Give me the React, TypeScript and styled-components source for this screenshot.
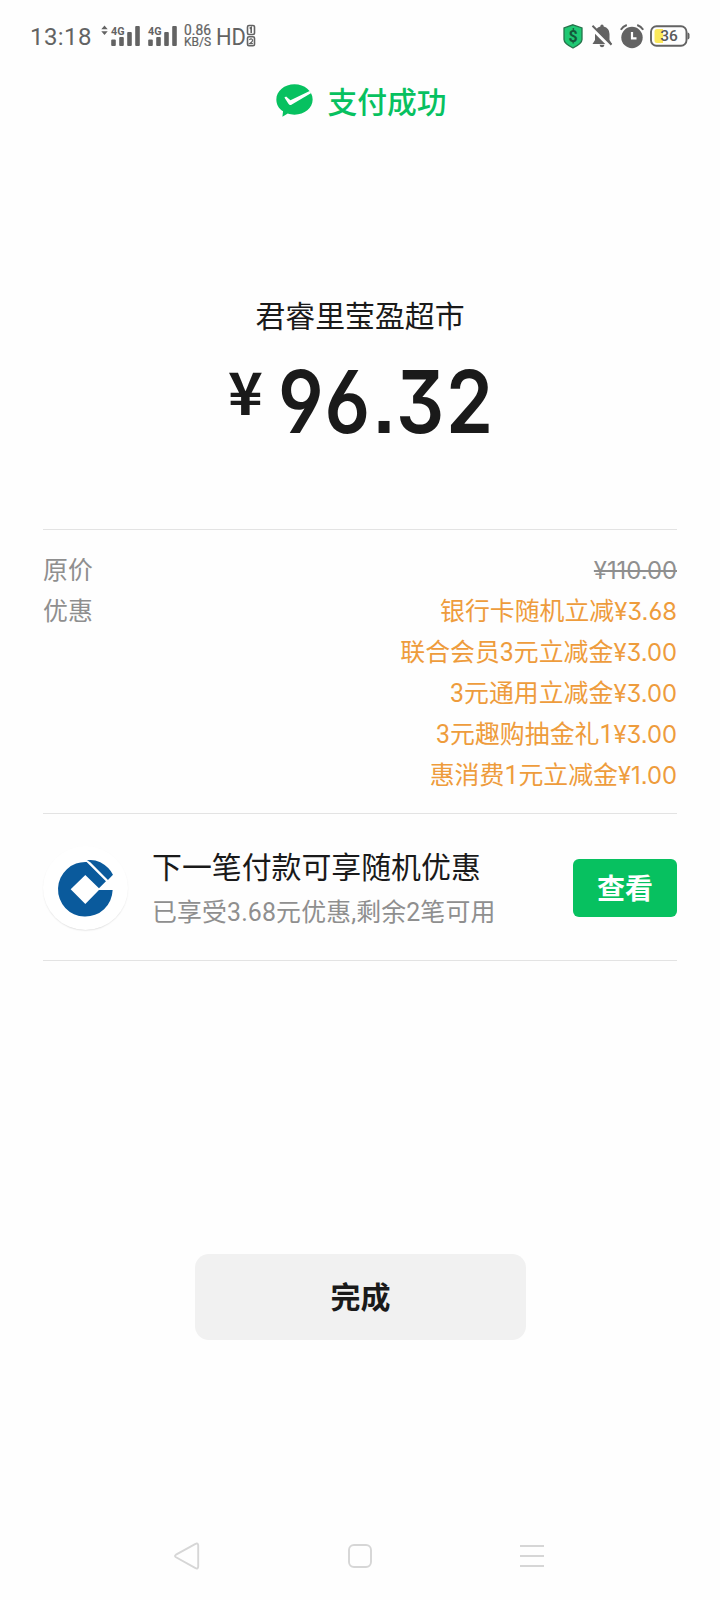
import React from 'react';
import styled, { createGlobalStyle } from 'styled-components';

const GlobalStyle = createGlobalStyle`
  * { box-sizing: border-box; }
  body {
    margin: 0;
    background: #fefefe;
    color: #1a1a1a;
    font-family: Roboto, 'Noto Sans CJK SC', sans-serif;
  }
`;

const Screen = styled.div`
  width: 720px;
  height: 1600px;
  display: flex;
  flex-direction: column;
  overflow: hidden;
`;

const StatusBar = styled.header`
  height: 72px;
  padding: 0 30px;
  display: flex;
  justify-content: space-between;
  align-items: center;
  font-family: Roboto, sans-serif;
  color: #636363;
`;

const StatusGroup = styled.div`
  display: flex;
  align-items: center;
`;

const Clock = styled.span`
  width: 61px;
  font-size: 24px;
  line-height: 28px;
  letter-spacing: 0.4px;
  padding-top: 2px;
`;

const Glyph = styled.svg<{ $gap?: number }>`
  display: block;
  flex: none;
  overflow: visible;
  margin-left: ${({ $gap = 0 }) => $gap}px;
`;

const Speed = styled.div`
  margin-left: 6px;
  width: 30px;
  display: flex;
  flex-direction: column;
  font-size: 13.8px;
  line-height: 12px;
  white-space: nowrap;
  -webkit-text-stroke: 0.2px currentColor;
`;

const SpeedUnit = styled.span`
  font-size: 12px;
  line-height: 12px;
`;

const ResultHeader = styled.div`
  height: 56px;
  margin-bottom: 2px;
  display: flex;
  justify-content: center;
  align-items: center;
  gap: 14px;
  padding-left: 3px;
  color: #07c160;
  font-size: 29.8px;
  font-weight: 500;
`;

const Summary = styled.section`
  height: 399px;
  padding-top: 163px;
  display: flex;
  flex-direction: column;
  align-items: center;
`;

const Merchant = styled.h1`
  margin: 0;
  font-size: 29.9px;
  font-weight: 400;
  line-height: 48px;
`;

const Amount = styled.div`
  display: flex;
  align-items: flex-start;
  margin-top: 16px;
  height: 90px;
`;

const Currency = styled.span`
  font-family: 'Noto Sans CJK SC', sans-serif;
  font-size: 59px;
  font-weight: 700;
  line-height: 66px;
  width: 50px;
`;

const Figure = styled.span`
  width: 214px;
  font-family: Inter, sans-serif;
  font-size: 86px;
  font-weight: 600;
  line-height: 90px;
  letter-spacing: 2px;
  font-feature-settings: 'cv03', 'cv04', 'cv09', 'ss07';
  transform: scaleX(0.88);
  transform-origin: left center;
`;

const Content = styled.div`
  margin: 0 43px;
`;

const PriceList = styled.dl`
  margin: 0;
  height: 284px;
  padding-top: 20px;
  border-top: 1px solid #e3e3e3;
  font-size: 24.9px;
  line-height: 41px;
`;

const PriceRow = styled.div`
  display: flex;
  justify-content: space-between;
`;

const Label = styled.dt`
  color: #8f8f8f;
`;

const Value = styled.dd`
  margin: 0;
  text-align: right;
  color: #ee9c3c;
`;

const Money = styled.span<{ $struck?: boolean }>`
  font-family: Inter, sans-serif;
  font-size: 23.8px;
  font-feature-settings: 'cv03', 'cv04', 'cv09', 'ss07';
  color: ${({ $struck }) => ($struck ? '#8f8f8f' : 'inherit')};
  text-decoration: ${({ $struck }) => ($struck ? 'line-through' : 'none')};
  text-decoration-thickness: 2px;
`;

const Promo = styled.section`
  height: 148px;
  display: flex;
  align-items: center;
  padding-top: 1px;
  border-top: 1px solid #e3e3e3;
  border-bottom: 1px solid #e3e3e3;
`;

const BankBadge = styled.div`
  width: 85px;
  height: 84px;
  border-radius: 50%;
  display: flex;
  align-items: center;
  justify-content: center;
  background: #fff;
  box-shadow: 0 1px 2px -1px rgba(0, 0, 0, 0.25);
`;

const PromoText = styled.div`
  flex: 1;
  margin-left: 24px;
  padding-top: 5px;
`;

const PromoTitle = styled.div`
  font-size: 29.9px;
  line-height: 46px;
`;

const PromoNote = styled.div`
  color: #8f8f8f;
  font-size: 24.9px;
  line-height: 44px;
  letter-spacing: 0.13px;
`;

const ViewButton = styled.button`
  width: 104px;
  height: 58px;
  border: 0;
  border-radius: 6px;
  padding: 0;
  background: #07c160;
  color: #fff;
  font: 700 28px/57px 'Noto Sans CJK SC', sans-serif;
`;

const DoneButton = styled.button`
  width: 331px;
  height: 86px;
  margin: 293px auto 0 195px;
  border: 0;
  border-radius: 14px;
  padding: 0 0 3px;
  background: #f1f1f1;
  color: #1a1a1a;
  font: 700 30px/83px 'Noto Sans CJK SC', sans-serif;
`;

const NavBar = styled.nav`
  margin-top: auto;
  height: 88px;
  padding: 0 176px 0 172px;
  display: flex;
  justify-content: space-between;
  align-items: center;
`;

const discounts = [
  { name: '银行卡随机立减', amount: '¥3.68' },
  { name: '联合会员3元立减金', amount: '¥3.00' },
  { name: '3元通用立减金', amount: '¥3.00' },
  { name: '3元趣购抽金礼1', amount: '¥3.00' },
  { name: '惠消费1元立减金', amount: '¥1.00' },
];

const Signal = ({ gap }: { gap: number }) => (
  <Glyph $gap={gap} width="30" height="22" viewBox="0 0 30 22" fill="#636363">
    <text x="0" y="9.5" fontSize="11.5" fontWeight="700" textLength="13.5" lengthAdjust="spacingAndGlyphs">4G</text>
    <rect x="0.2" y="14.5" width="4.6" height="6.5" rx="1" />
    <rect x="8.2" y="12" width="4.6" height="9" rx="1" />
    <rect x="16.2" y="7" width="4.6" height="14" rx="1" />
    <rect x="24.2" y="1" width="4.6" height="20" rx="1" />
  </Glyph>
);

export default function App() {
  return (
    <Screen>
      <GlobalStyle />
      <StatusBar>
        <StatusGroup>
          <Clock>13:18</Clock>
          <Glyph $gap={10} width="7" height="24" viewBox="0 0 7 24" fill="#636363">
            <path d="M0.3 5.3 3.5 1.5l3.2 3.8zM0.3 7.3h6.4L3.5 11z" />
          </Glyph>
          <Signal gap={3} />
          <Signal gap={7} />
          <Speed>
            <span>0.86</span>
            <SpeedUnit>KB/S</SpeedUnit>
          </Speed>
          <Glyph $gap={3} width="40" height="24" viewBox="0 0 40 24" fill="#636363">
            <text x="-1" y="20.5" fontSize="24" textLength="30" lengthAdjust="spacingAndGlyphs">HD</text>
            <rect x="30.5" y="1.5" width="7" height="9" rx="1.5" fill="none" stroke="#636363" strokeWidth="1.6" />
            <path d="M32.7 4.5 34.2 3.5V9" fill="none" stroke="#636363" strokeWidth="1.6" />
            <rect x="30.5" y="12.8" width="7" height="9" rx="1.5" fill="none" stroke="#636363" strokeWidth="1.6" />
            <path d="M32.3 15.8q1.8-1.8 3-.3t-2.8 4.2h3.4" fill="none" stroke="#636363" strokeWidth="1.2" />
          </Glyph>
        </StatusGroup>
        <StatusGroup>
          <Glyph width="20" height="25" viewBox="0 0 20 25">
            <path d="M10 .8 19 4v11.5q0 4-9 8.5-9-4.5-9-8.5V4z" fill="#1fc873" stroke="#26734b" strokeWidth="1.3" />
            <text x="10" y="18" textAnchor="middle" fontSize="16" fontWeight="700" fill="#14573a">$</text>
          </Glyph>
          <Glyph $gap={9} width="20" height="24" viewBox="0 0 20 24" fill="#636363">
            <path d="M10 .5q1.7 0 1.7 2Q17.5 4 17.500 10v6l2.500 4H.5L3 16v-6q0-6 5.300-7.500 0-2 1.700-2zM7.500 20.800h5Q12 23.300 10 23.300t-2.500-2.500z" />
            <path d="M-.5 3.800 18 22.300" stroke="#fefefe" strokeWidth="3.5" />
            <path d="M.5 1.800 19.500 20.800" stroke="#636363" strokeWidth="2" />
          </Glyph>
          <Glyph $gap={8} width="24" height="25" viewBox="0 0 24 25" fill="none" stroke="#636363">
            <circle cx="12" cy="13.5" r="10.7" fill="#636363" stroke="none" />
            <path d="M.8 5.800Q3 2.300 6.800 1M23.200 5.800Q21 2.300 17.200 1" strokeWidth="2" />
            <path d="M12 8v6.300h4.500" stroke="#fefefe" strokeWidth="2.2" />
          </Glyph>
          <Glyph $gap={6} width="40" height="22" viewBox="0 0 40 22">
            <path d="M7 4h6v14H7q-2.500 0-2.500-2.500v-9Q4.500 4 7 4z" fill="#fce95a" />
            <rect x="1" y="1.2" width="35.5" height="19.6" rx="5.5" fill="none" stroke="#636363" strokeWidth="1.9" />
            <path d="M37.5 7.500q2 0 2 2v3q0 2-2 2z" fill="#636363" />
            <text x="19" y="16.3" textAnchor="middle" fontSize="15.5" fontWeight="500" fill="#5a5a5a">36</text>
          </Glyph>
        </StatusGroup>
      </StatusBar>

      <ResultHeader>
        <Glyph width="37" height="33" viewBox="50 42 110 98">
          <path d="M105 43c30 0 54 20 54 45s-24 45-54 45c-8 0-14-1-20-3l-16 9 2-16c-13-8-20-20-20-35 0-25 24-45 54-45z" fill="#07c160" />
          <path d="M75 82 80 79 93 90 150 63 155 69 97 103Q91 107 87 101z" fill="#fefefe" />
        </Glyph>
        支付成功
      </ResultHeader>

      <Summary>
        <Merchant>君睿里莹盈超市</Merchant>
        <Amount>
          <Currency>¥</Currency>
          <Figure>96.32</Figure>
        </Amount>
      </Summary>

      <Content>
        <PriceList>
          <PriceRow>
            <Label>原价</Label>
            <Value>
              <Money $struck>¥110.00</Money>
            </Value>
          </PriceRow>
          <PriceRow>
            <Label>优惠</Label>
            <Value>
              {discounts.map(({ name, amount }) => (
                <div key={name}>
                  {name}
                  <Money>{amount}</Money>
                </div>
              ))}
            </Value>
          </PriceRow>
        </PriceList>
        <Promo>
          <BankBadge>
            <Glyph width="55.3" height="58" viewBox="84 84 166 174" fill="#0a5a9c">
              <path d="M248 177A82 82 0 1 1 170 93L228 151 207 172 166 132 122 175 166 219 207 177z" />
              <path d="M171 88Q190 84 211 94 237 108 249 131L234 147 181 94z" />
            </Glyph>
          </BankBadge>
          <PromoText>
            <PromoTitle>下一笔付款可享随机优惠</PromoTitle>
            <PromoNote>已享受3.68元优惠,剩余2笔可用</PromoNote>
          </PromoText>
          <ViewButton>查看</ViewButton>
        </Promo>
      </Content>

      <DoneButton>完成</DoneButton>

      <NavBar>
        <Glyph width="28" height="28" viewBox="0 0 28 28" fill="none" stroke="#d6d6d6" strokeWidth="1.9">
          <path d="M4 12.700 23.500 1.800q2.500-1 2.700 1.500v21.400q-.2 2.500-2.700 1.500L4 15.300q-2-1.300 0-2.600z" />
        </Glyph>
        <Glyph width="24" height="24" viewBox="0 0 24 24" fill="none" stroke="#d6d6d6" strokeWidth="1.9">
          <rect x="1" y="1" width="22" height="22" rx="5" />
        </Glyph>
        <Glyph width="24" height="24" viewBox="0 0 24 24" fill="none" stroke="#d6d6d6" strokeWidth="2">
          <path d="M0 2h24M0 12h24M0 22h24" />
        </Glyph>
      </NavBar>
    </Screen>
  );
}
